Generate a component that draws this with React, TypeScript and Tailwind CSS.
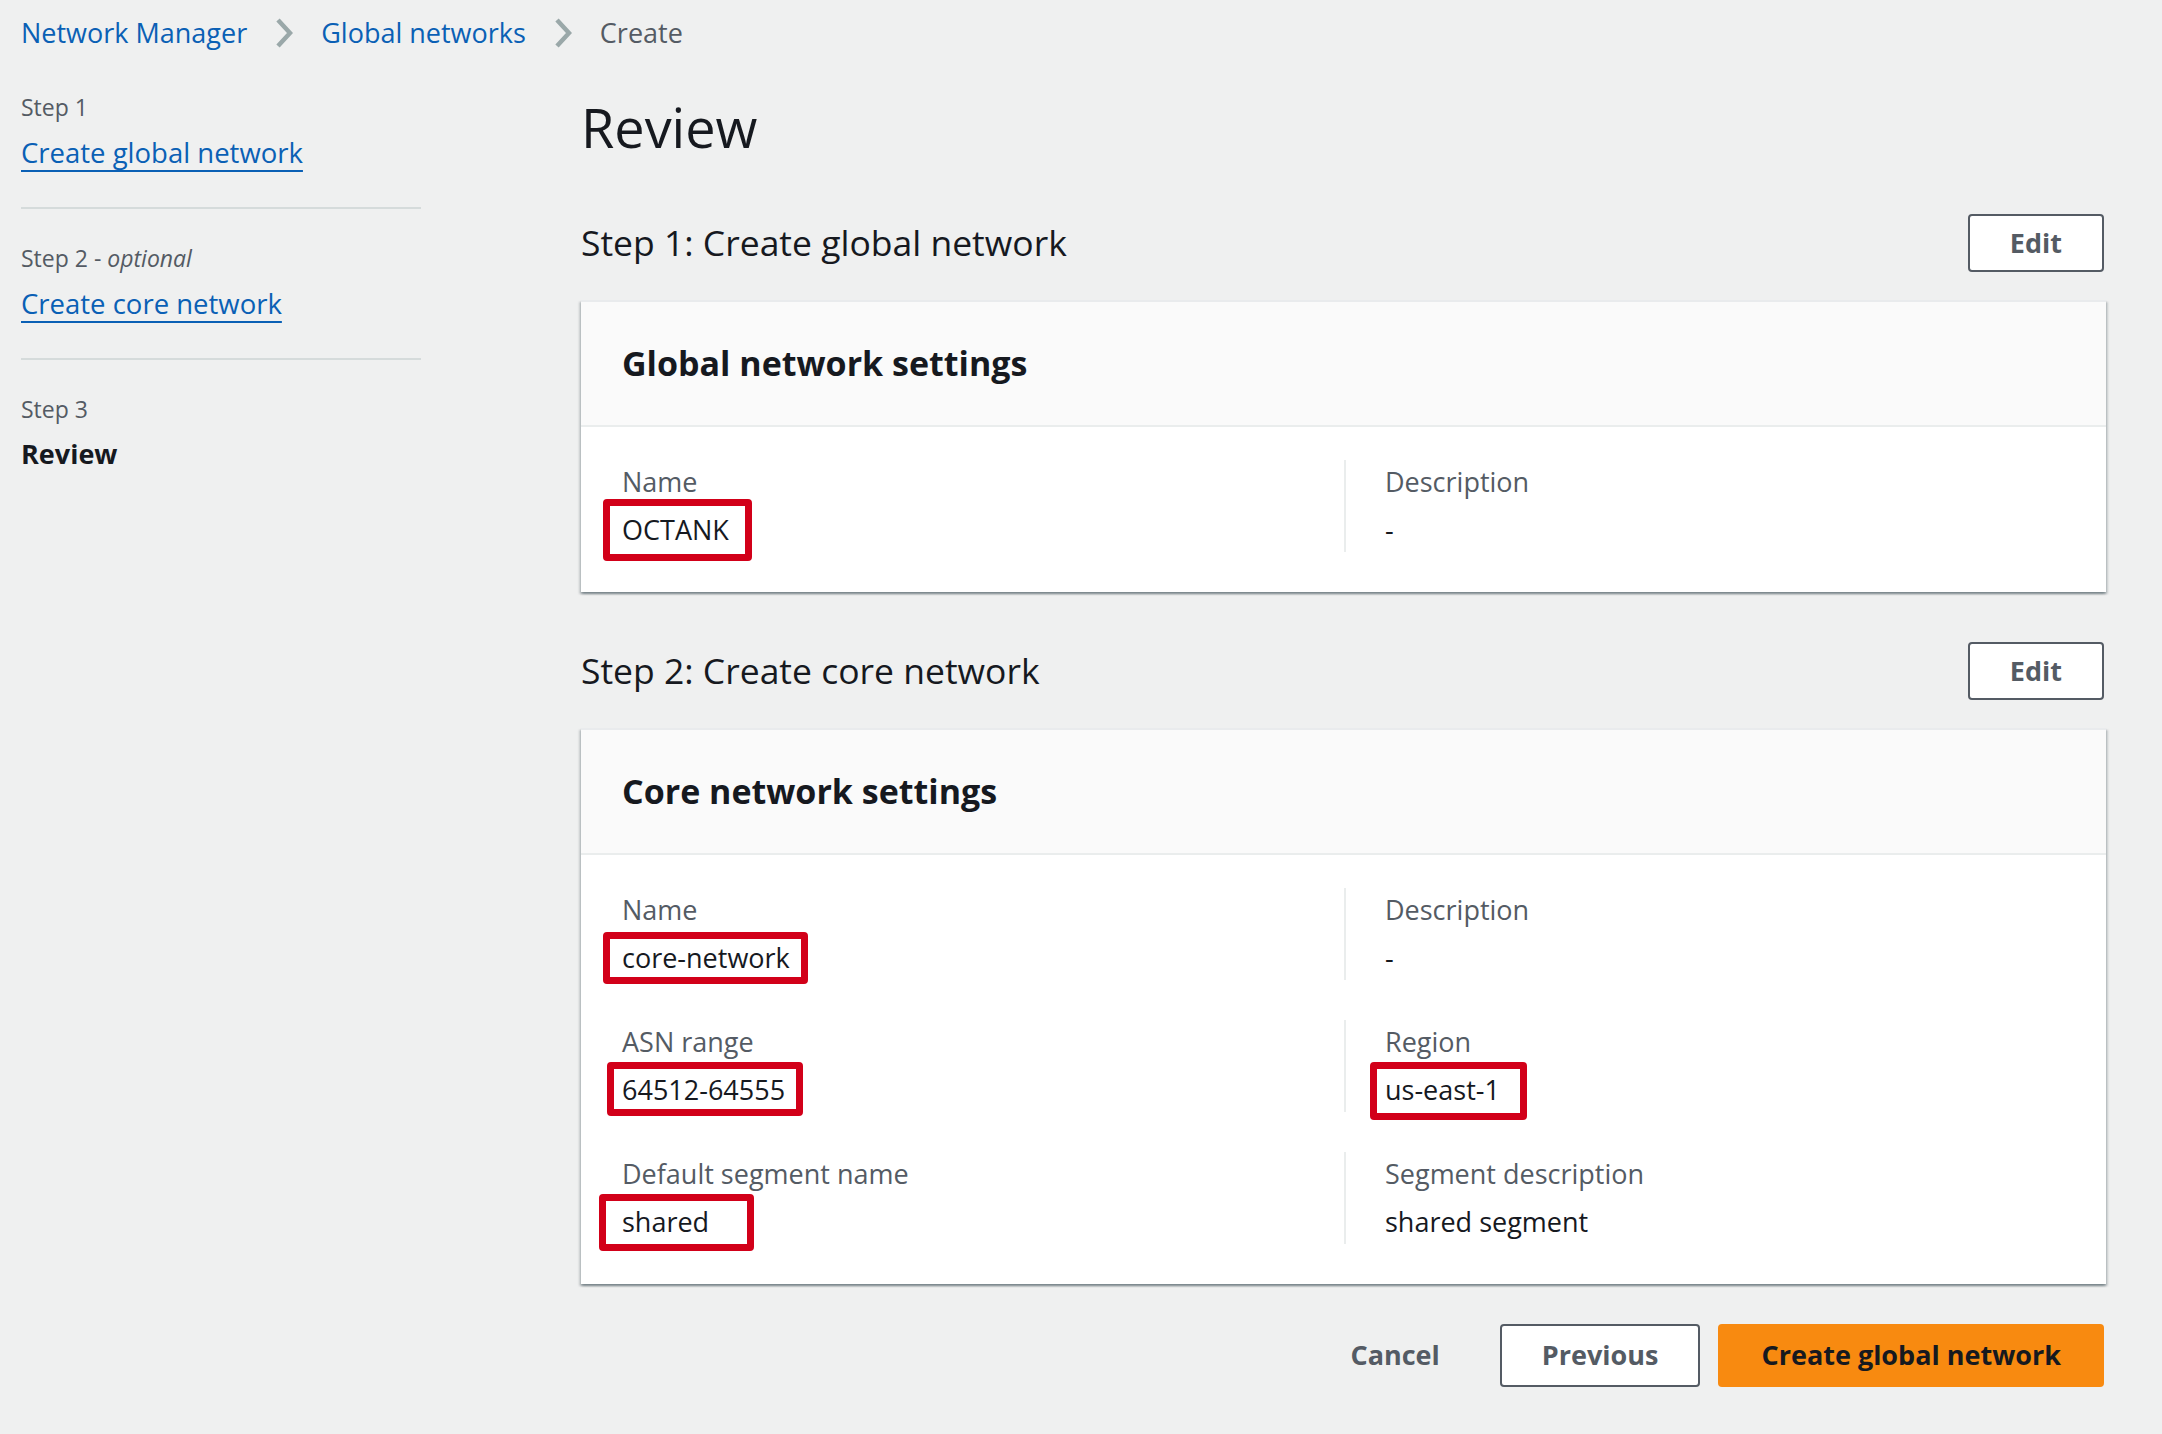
import React from 'react';

const Chevron = () => (
  <svg width="18" height="30" viewBox="0 0 18 30" fill="none" className="shrink-0">
    <path d="M3 2 L15 15 L3 28" stroke="#9aa8a9" strokeWidth="4.5" />
  </svg>
);

type FieldProps = {
  label: string;
  value: string;
  box?: string;
  second?: boolean;
};

const Field = ({ label, value, box, second }: FieldProps) => (
  <div className={second ? 'border-l-2 border-[#eaeded] pl-[39px]' : 'pr-[40px]'}>
    <div className="h-[44px] leading-[44px] text-[27px] text-[#545b64]">{label}</div>
    <div className="mt-[4px] h-[44px] leading-[44px] text-[27px] text-[#16191f]">
      <span className="relative inline-block">
        {value}
        {box && <span className={`absolute border-[7px] border-[#d20019] rounded-[4px] ${box}`} />}
      </span>
    </div>
  </div>
);

const Card = ({ title, children }: { title: string; children: React.ReactNode }) => (
  <div className="mt-[28px] bg-white border-t-2 border-[#e9ebed] shadow-[0_2px_2px_0_rgba(0,28,36,0.3),2px_2px_2px_0_rgba(0,28,36,0.15),-2px_2px_2px_0_rgba(0,28,36,0.15)]">
    <div className="h-[125px] flex items-center pl-[41px] bg-[#fafafa] border-b-2 border-[#eaeded] text-[34px] font-bold text-[#16191f]">
      {title}
    </div>
    <div className="grid grid-cols-2 gap-y-[40px] pl-[41px] pr-[40px] pt-[33px] pb-[40px]">{children}</div>
  </div>
);

const SectionHead = ({ title, className }: { title: string; className: string }) => (
  <div className={`h-[58px] flex items-center justify-between ${className}`}>
    <h2 className="text-[35.5px] text-[#16191f]">{title}</h2>
    <button className="h-[58px] px-[40px] mr-[2px] border-2 border-[#545b64] rounded-[4px] bg-white text-[27px] font-bold text-[#545b64]">
      Edit
    </button>
  </div>
);

export default function App() {
  return (
    <div className="min-h-screen bg-[#eff0f0] font-['Open_Sans','Noto_Sans',sans-serif] pl-[21px] pr-[56px] pb-[40px]">
      {/* Breadcrumbs */}
      <div className="pt-[13px] h-[53px] flex items-center gap-[28px] text-[27px] leading-[40px]">
        <span className="text-[#0a60b5]">Network Manager</span>
        <Chevron />
        <span className="text-[#0a60b5]">Global networks</span>
        <Chevron />
        <span className="text-[#545b64]">Create</span>
      </div>

      <div className="flex">
        {/* Wizard steps */}
        <nav className="w-[400px] shrink-0 pt-[38px]">
          <div className="h-[32px] leading-[32px] text-[23px] text-[#545b64]">Step 1</div>
          <div className="mt-[10px] h-[40px] leading-[40px] text-[27.5px]">
            <span className="text-[#0a60b5] underline decoration-2 underline-offset-[7px]">Create global network</span>
          </div>
          <div className="mt-[34px] h-[2px] bg-[#d5dbdb]" />
          <div className="mt-[33px] h-[32px] leading-[32px] text-[23px] text-[#545b64]">
            Step 2 - <span className="italic">optional</span>
          </div>
          <div className="mt-[10px] h-[40px] leading-[40px] text-[27.5px]">
            <span className="text-[#0a60b5] underline decoration-2 underline-offset-[7px]">Create core network</span>
          </div>
          <div className="mt-[34px] h-[2px] bg-[#d5dbdb]" />
          <div className="mt-[33px] h-[32px] leading-[32px] text-[23px] text-[#545b64]">Step 3</div>
          <div className="mt-[9px] h-[40px] leading-[40px] text-[27px] font-bold text-[#16191f]">Review</div>
        </nav>

        {/* Main content */}
        <main className="flex-1 ml-[160px]">
          <h1 className="mt-[42px] h-[64px] leading-[64px] text-[54px] text-[#16191f]">Review</h1>

          <SectionHead title="Step 1: Create global network" className="mt-[55px]" />
          <Card title="Global network settings">
            <Field label="Name" value="OCTANK" box="top-[-9px] bottom-[-9px] left-[-19px] right-[-23px]" />
            <Field label="Description" value="-" second />
          </Card>

          <SectionHead title="Step 2: Create core network" className="mt-[50px]" />
          <Card title="Core network settings">
            <Field label="Name" value="core-network" box="top-[-4px] bottom-[-4px] left-[-19px] right-[-18px]" />
            <Field label="Description" value="-" second />
            <Field label="ASN range" value="64512-64555" box="top-[-6px] bottom-[-4px] left-[-15px] right-[-18px]" />
            <Field label="Region" value="us-east-1" second box="top-[-6px] bottom-[-8px] left-[-15px] right-[-27px]" />
            <Field label="Default segment name" value="shared" box="top-[-6px] bottom-[-7px] left-[-23px] right-[-45px]" />
            <Field label="Segment description" value="shared segment" second />
          </Card>

          {/* Actions */}
          <div className="mt-[40px] flex justify-end items-center gap-[18px] mr-[2px]">
            <button className="h-[63px] px-[42px] text-[27px] font-bold text-[#545b64]">Cancel</button>
            <button className="h-[63px] px-[40px] border-2 border-[#545b64] rounded-[4px] bg-white text-[27px] font-bold text-[#545b64]">
              Previous
            </button>
            <button className="h-[63px] px-[43px] rounded-[4px] bg-[#f88a10] text-[27px] font-bold text-[#16191f]">
              Create global network
            </button>
          </div>
        </main>
      </div>
    </div>
  );
}
